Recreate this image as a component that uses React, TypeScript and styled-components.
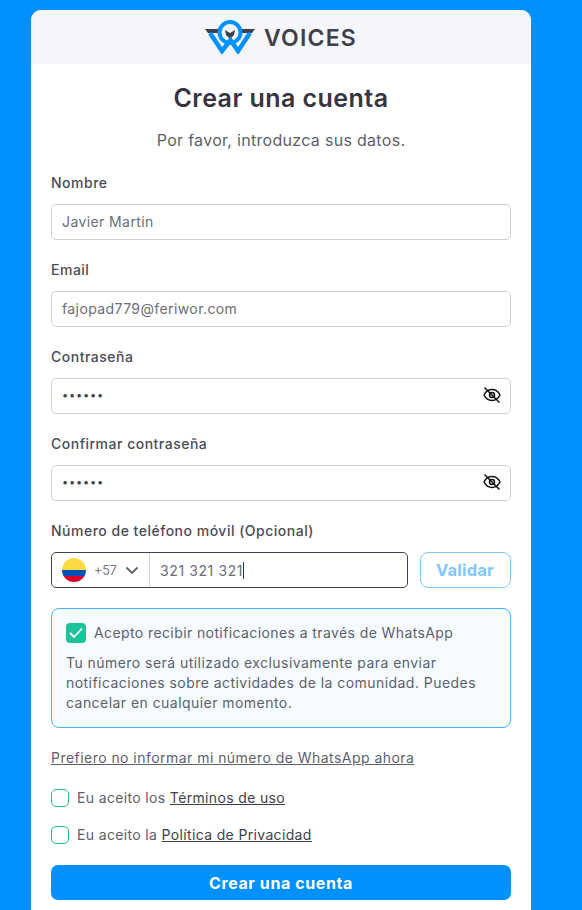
import React from "react";
import styled, { createGlobalStyle } from "styled-components";

const GlobalStyle = createGlobalStyle`
  html, body {
    margin: 0;
    padding: 0;
    height: 910px;
    overflow: hidden;
    background: #0091ff;
    font-family: Inter, "Liberation Sans", sans-serif;
  }
  * { box-sizing: border-box; }
`;

const Page = styled.div`
  padding: 10px 51px 0 31px;
  height: 910px;
  overflow: hidden;
`;

const Card = styled.div`
  width: 500px;
  min-height: 900px;
  background: #fff;
  border-radius: 10px 10px 0 0;
  overflow: hidden;
`;

const Header = styled.div`
  height: 54px;
  background: #f5f6fa;
  display: flex;
  align-items: center;
  justify-content: center;
  gap: 9px;
`;

const Brand = styled.span`
  font-size: 23px;
  font-weight: 600;
  letter-spacing: 1.2px;
  color: #3e3f4b;
  padding-top: 2px;
`;

const Body = styled.div`
  padding: 0 20px;
`;

const Title = styled.h1`
  margin: 19px 0 0;
  font-size: 25px;
  line-height: 30px;
  font-weight: 600;
  letter-spacing: 0.45px;
  text-align: center;
  color: #343541;
`;

const Subtitle = styled.p`
  margin: 16px 0 0;
  font-size: 16px;
  line-height: 22px;
  letter-spacing: 0.3px;
  text-align: center;
  color: #5d5f6b;
`;

const Field = styled.div`
  margin-top: 20px;
  &:first-of-type {
    margin-top: 22px;
  }
`;

const Label = styled.div`
  font-size: 14px;
  line-height: 20px;
  font-weight: 500;
  letter-spacing: 0.5px;
  color: #4a4b58;
  margin-bottom: 11px;
`;

const InputBox = styled.div`
  height: 36px;
  border: 1px solid #d0d1d6;
  border-radius: 5px;
  display: flex;
  align-items: center;
  justify-content: space-between;
  padding: 0 9px 2px 10px;
  font-size: 14px;
  letter-spacing: 0.4px;
  color: #6b6d78;
`;

const Dots = styled.span`
  font-size: 11px;
  letter-spacing: 0.8px;
  color: #40414e;
`;

const PhoneRow = styled.div`
  display: flex;
  gap: 12px;
`;

const PhoneBox = styled.div`
  flex: 1;
  height: 36px;
  border: 1px solid #40414e;
  border-radius: 5px;
  display: flex;
  align-items: center;
`;

const CountryPicker = styled.div`
  width: 98px;
  height: 100%;
  display: flex;
  align-items: center;
  padding-left: 10px;
  border-right: 1px solid #d0d1d6;
`;

const Flag = styled.div`
  width: 24px;
  height: 24px;
  border-radius: 50%;
  background: linear-gradient(#ffda44 0 50%, #0052b4 50% 75%, #d80027 75%);
`;

const Code = styled.span`
  margin-left: 8px;
  font-size: 12.5px;
  color: #7a7c87;
`;

const PhoneValue = styled.div`
  display: flex;
  align-items: center;
  padding-left: 10px;
  font-size: 14px;
  letter-spacing: 0.6px;
  color: #6b6d78;
`;

const Caret = styled.span`
  width: 1px;
  height: 17px;
  background: #343541;
`;

const ValidateButton = styled.button`
  width: 91px;
  height: 36px;
  background: #fff;
  border: 1px solid #80c8ff;
  border-radius: 8px;
  font-family: inherit;
  font-size: 16.5px;
  font-weight: 700;
  letter-spacing: 0.2px;
  color: #80c8ff;
  padding: 0 1px 0 0;
`;

const Notice = styled.div`
  margin-top: 20px;
  height: 120px;
  border: 1px solid #4db2ff;
  border-radius: 8px;
  background: #f5fbff;
  padding: 14px 14px 0;
`;

const NoticeHead = styled.div`
  display: flex;
  align-items: center;
  gap: 8px;
  font-size: 14px;
  line-height: 20px;
  letter-spacing: 0.4px;
  color: #5d5f6b;
`;

const CheckedBox = styled.span`
  width: 20px;
  height: 20px;
  border-radius: 4px;
  background: #1cc29a;
  display: flex;
  align-items: center;
  justify-content: center;
`;

const NoticeText = styled.p`
  margin: 10px 0 0;
  font-size: 14px;
  line-height: 20px;
  letter-spacing: 0.45px;
  color: #5d5f6b;
`;

const SkipLink = styled.a`
  display: block;
  margin-top: 20px;
  font-size: 14px;
  line-height: 20px;
  letter-spacing: 0.46px;
  color: #5d5f6b;
  text-decoration: underline;
`;

const Consent = styled.div`
  display: flex;
  align-items: center;
  gap: 8px;
  margin-top: 20px;
  font-size: 14px;
  line-height: 20px;
  letter-spacing: 0.35px;
  color: #5d5f6b;
  & + & {
    margin-top: 17px;
  }
`;

const EmptyBox = styled.span`
  width: 18px;
  height: 18px;
  border: 1px solid #1cc29a;
  border-radius: 5px;
`;

const ConsentLink = styled.a`
  color: #40414e;
  text-decoration: underline;
`;

const SubmitButton = styled.button`
  display: block;
  width: 100%;
  height: 35px;
  margin-top: 20px;
  background: #0091ff;
  border: 0;
  border-radius: 7px;
  font-family: inherit;
  font-size: 16px;
  font-weight: 700;
  letter-spacing: 0.6px;
  color: #fff;
`;

const Logo = () => (
  <svg width="50" height="34" viewBox="0 0 50 34">
    <path d="M0 9h14l1 4H3z" fill="#3e3f4b" />
    <path d="M50 9H36l-1 4h12z" fill="#3e3f4b" />
    <path d="M20 10l5 3 5-3-1 5-4 4-4-4z" fill="#3e3f4b" />
    <path d="M5 13l12 18 8.500-11L33 31l12-18" fill="none" stroke="#0091ff" strokeWidth="4.500" />
    <circle cx="25" cy="12.500" r="10.500" fill="none" stroke="#0091ff" strokeWidth="4" />
  </svg>
);

const EyeOff = () => (
  <svg width="18" height="18" viewBox="0 0 18 18" fill="none" stroke="#111" strokeWidth="1.500">
    <path d="M1 9c2-4 5-5.500 8-5.500s6 1.500 8 5.500c-2 4-5 5.500-8 5.500S3 13 1 9z" />
    <circle cx="9" cy="9" r="2.500" />
    <path d="M1.500 1.500l15 15" />
  </svg>
);

const ChevronIcon = styled.svg`
  margin-left: 8px;
`;

const Chevron = () => (
  <ChevronIcon width="14" height="9" viewBox="0 0 14 9" fill="none" stroke="#5d5f6b" strokeWidth="1.800">
    <path d="M1.500 1.500L7 7l5.500-5.500" />
  </ChevronIcon>
);

const Check = () => (
  <svg width="14" height="12" viewBox="0 0 14 12" fill="none" stroke="#fff" strokeWidth="1.800">
    <path d="M1 6l4 4 8-8.500" />
  </svg>
);

export default function App() {
  return (
    <Page>
      <GlobalStyle />
      <Card>
        <Header>
          <Logo />
          <Brand>VOICES</Brand>
        </Header>
        <Body>
          <Title>Crear una cuenta</Title>
          <Subtitle>Por favor, introduzca sus datos.</Subtitle>
          <Field>
            <Label>Nombre</Label>
            <InputBox>Javier Martin</InputBox>
          </Field>
          <Field>
            <Label>Email</Label>
            <InputBox>fajopad779@feriwor.com</InputBox>
          </Field>
          <Field>
            <Label>Contraseña</Label>
            <InputBox>
              <Dots>••••••</Dots>
              <EyeOff />
            </InputBox>
          </Field>
          <Field>
            <Label>Confirmar contraseña</Label>
            <InputBox>
              <Dots>••••••</Dots>
              <EyeOff />
            </InputBox>
          </Field>
          <Field>
            <Label>Número de teléfono móvil (Opcional)</Label>
            <PhoneRow>
              <PhoneBox>
                <CountryPicker>
                  <Flag />
                  <Code>+57</Code>
                  <Chevron />
                </CountryPicker>
                <PhoneValue>
                  321 321 321
                  <Caret />
                </PhoneValue>
              </PhoneBox>
              <ValidateButton>Validar</ValidateButton>
            </PhoneRow>
          </Field>
          <Notice>
            <NoticeHead>
              <CheckedBox>
                <Check />
              </CheckedBox>
              Acepto recibir notificaciones a través de WhatsApp
            </NoticeHead>
            <NoticeText>
              Tu número será utilizado exclusivamente para enviar
              <br />
              notificaciones sobre actividades de la comunidad. Puedes
              <br />
              cancelar en cualquier momento.
            </NoticeText>
          </Notice>
          <SkipLink>Prefiero no informar mi número de WhatsApp ahora</SkipLink>
          <Consent>
            <EmptyBox />
            <span>
              Eu aceito los <ConsentLink>Términos de uso</ConsentLink>
            </span>
          </Consent>
          <Consent>
            <EmptyBox />
            <span>
              Eu aceito la <ConsentLink>Política de Privacidad</ConsentLink>
            </span>
          </Consent>
          <SubmitButton>Crear una cuenta</SubmitButton>
        </Body>
      </Card>
    </Page>
  );
}
